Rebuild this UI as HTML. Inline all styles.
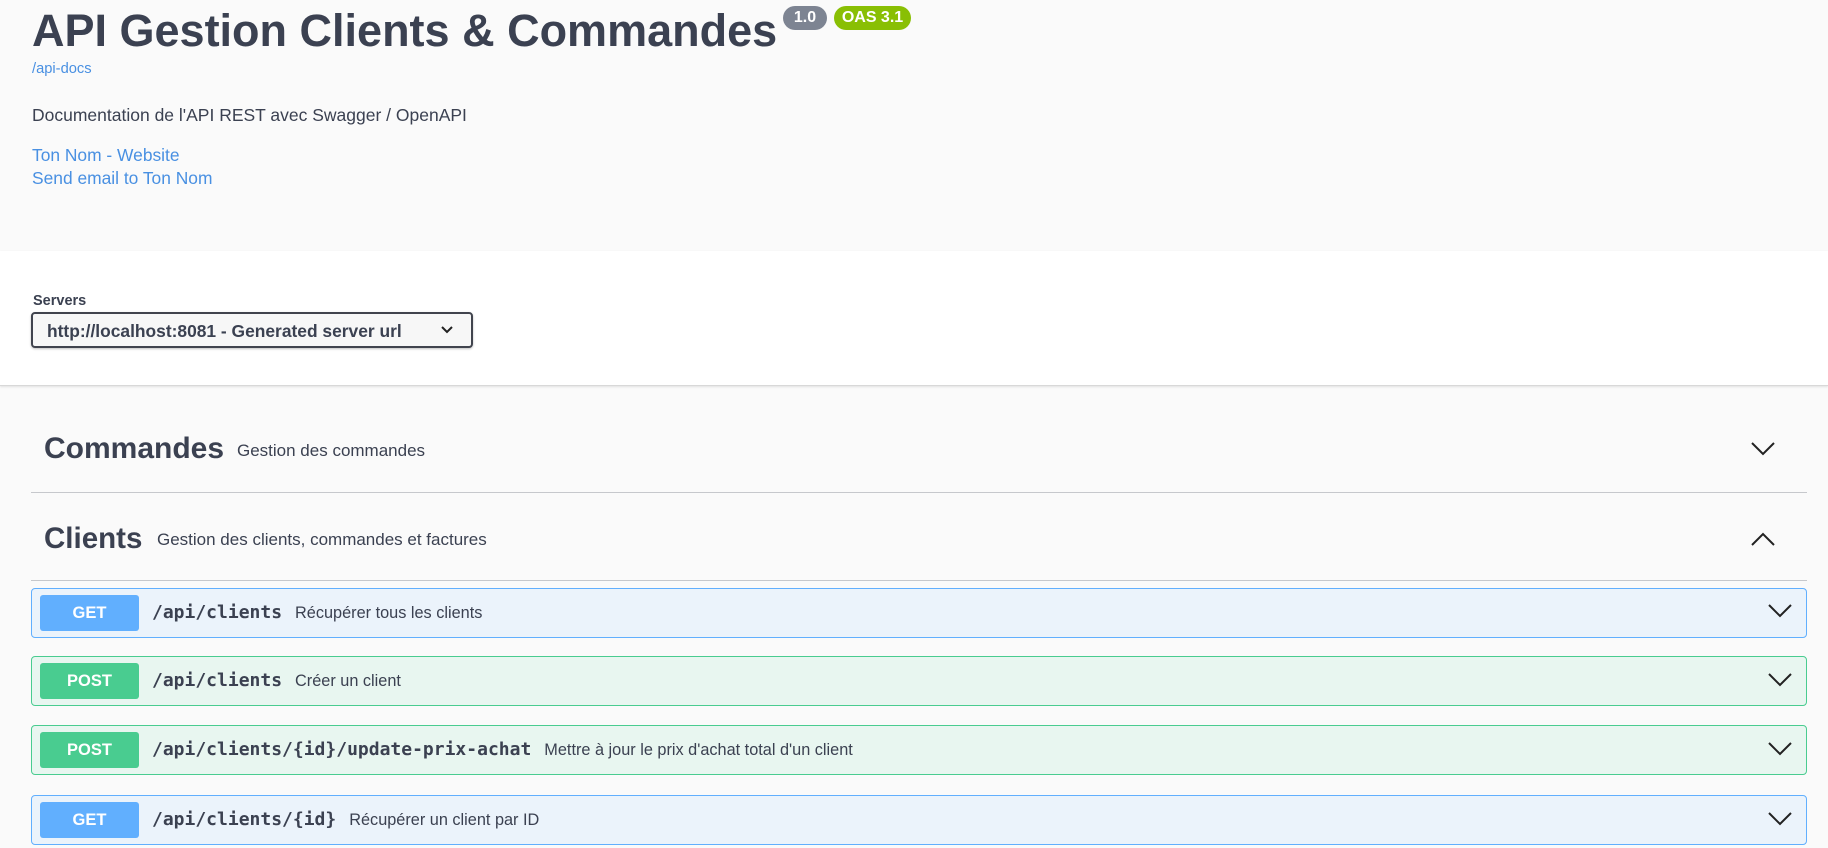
<!DOCTYPE html>
<html><head><meta charset="utf-8"><style>
*{margin:0;padding:0;box-sizing:border-box}
body{width:1828px;height:848px;overflow:hidden;background:#fafafa;font-family:"Liberation Sans",sans-serif;color:#3b4151;position:relative}
.a{position:absolute;white-space:nowrap}
.link{color:#4990e2}
.top{position:absolute;left:0;top:0;width:1828px;height:251px;background:#fafafa}
.srv{position:absolute;left:0;top:251px;width:1828px;height:135px;background:#fff;border-bottom:1px solid #d8d8d8;box-shadow:0 1px 2px rgba(0,0,0,.1)}
.sel{position:absolute;left:31px;top:312px;width:442px;height:36px;border:2px solid #41444e;border-radius:4px;background:#f7f7f7;box-shadow:0 1px 2px rgba(0,0,0,.25);font-weight:bold;font-size:17.4px;padding:7px 0 0 14px}
.hline{position:absolute;left:31px;width:1776px;height:1px;background:#c6c8cc}
.op{position:absolute;left:31px;width:1776px;height:50px;border:1px solid;border-radius:4px}
.get{background:#ebf3fb;border-color:#61affe}
.post{background:#e8f6f0;border-color:#49cc90}
.m{position:absolute;left:8px;top:6px;width:99px;height:36px;border-radius:3px;color:#fff;font-weight:bold;font-size:16.5px;text-align:center;line-height:36px}
.get .m{background:#61affe}.post .m{background:#49cc90}
.p{position:absolute;left:120px;top:0;line-height:48px;font-family:"DejaVu Sans Mono","Liberation Mono",monospace;font-weight:bold;font-size:18px}
.d{font-family:"Liberation Sans",sans-serif;font-weight:normal;font-size:16.3px;margin-left:13px}
svg{position:absolute}
</style></head><body>
<div class="top"></div>
<div class="a" style="left:32px;top:3px;font-size:45px;font-weight:bold;line-height:56px">API Gestion Clients &amp; Commandes</div>
<div class="a" style="left:783px;top:6px;width:44px;height:24px;border-radius:12px;background:#7d8492;color:#fff;font-weight:bold;font-size:16px;line-height:24px;text-align:center">1.0</div>
<div class="a" style="left:834px;top:6px;width:77px;height:24px;border-radius:12px;background:#89bf04;color:#fff;font-weight:bold;font-size:16px;line-height:24px;text-align:center">OAS 3.1</div>
<div class="a link" style="left:32px;top:61px;font-size:14.7px">/api-docs</div>
<div class="a" style="left:32px;top:105px;font-size:17.5px">Documentation de l'API REST avec Swagger / OpenAPI</div>
<div class="a link" style="left:32px;top:145px;font-size:17.4px">Ton Nom - Website</div>
<div class="a link" style="left:32px;top:168px;font-size:17.4px">Send email to Ton Nom</div>
<div class="srv"></div>
<div class="a" style="left:33px;top:293px;font-size:14.5px;font-weight:bold">Servers</div>
<div class="sel">http://localhost:8081 - Generated server url</div>
<svg style="left:440px;top:324px" width="14" height="12" viewBox="0 0 14 12"><path d="M2 3l5 5 5-5" fill="none" stroke="#222" stroke-width="2"/></svg>
<div class="a" style="left:44px;top:432px;font-size:30px;font-weight:bold">Commandes</div>
<div class="a" style="left:237px;top:441px;font-size:17px">Gestion des commandes</div>
<svg style="left:1750px;top:440px" width="26" height="16" viewBox="0 0 26 16"><path d="M2 3l11 11 11-11" fill="none" stroke="#222" stroke-width="2"/></svg>
<div class="hline" style="top:492px"></div>
<div class="a" style="left:44px;top:522px;font-size:29.5px;font-weight:bold">Clients</div>
<div class="a" style="left:157px;top:530px;font-size:17px">Gestion des clients, commandes et factures</div>
<svg style="left:1750px;top:531px" width="26" height="16" viewBox="0 0 26 16"><path d="M2 14l11-11 11 11" fill="none" stroke="#222" stroke-width="2"/></svg>
<div class="hline" style="top:580px"></div>
<div class="op get" style="top:588px"><div class="m">GET</div><div class="p">/api/clients<span class="d">Récupérer tous les clients</span></div></div>
<div class="op post" style="top:656px"><div class="m">POST</div><div class="p">/api/clients<span class="d">Créer un client</span></div></div>
<div class="op post" style="top:725px"><div class="m">POST</div><div class="p">/api/clients/{id}/update-prix-achat<span class="d">Mettre à jour le prix d'achat total d'un client</span></div></div>
<div class="op get" style="top:795px"><div class="m">GET</div><div class="p">/api/clients/{id}<span class="d">Récupérer un client par ID</span></div></div>
<svg style="left:1767px;top:602px" width="26" height="16" viewBox="0 0 26 16"><path d="M2 3l11 11 11-11" fill="none" stroke="#222" stroke-width="2"/></svg>
<svg style="left:1767px;top:671px" width="26" height="16" viewBox="0 0 26 16"><path d="M2 3l11 11 11-11" fill="none" stroke="#222" stroke-width="2"/></svg>
<svg style="left:1767px;top:740px" width="26" height="16" viewBox="0 0 26 16"><path d="M2 3l11 11 11-11" fill="none" stroke="#222" stroke-width="2"/></svg>
<svg style="left:1767px;top:810px" width="26" height="16" viewBox="0 0 26 16"><path d="M2 3l11 11 11-11" fill="none" stroke="#222" stroke-width="2"/></svg>
</body></html>
